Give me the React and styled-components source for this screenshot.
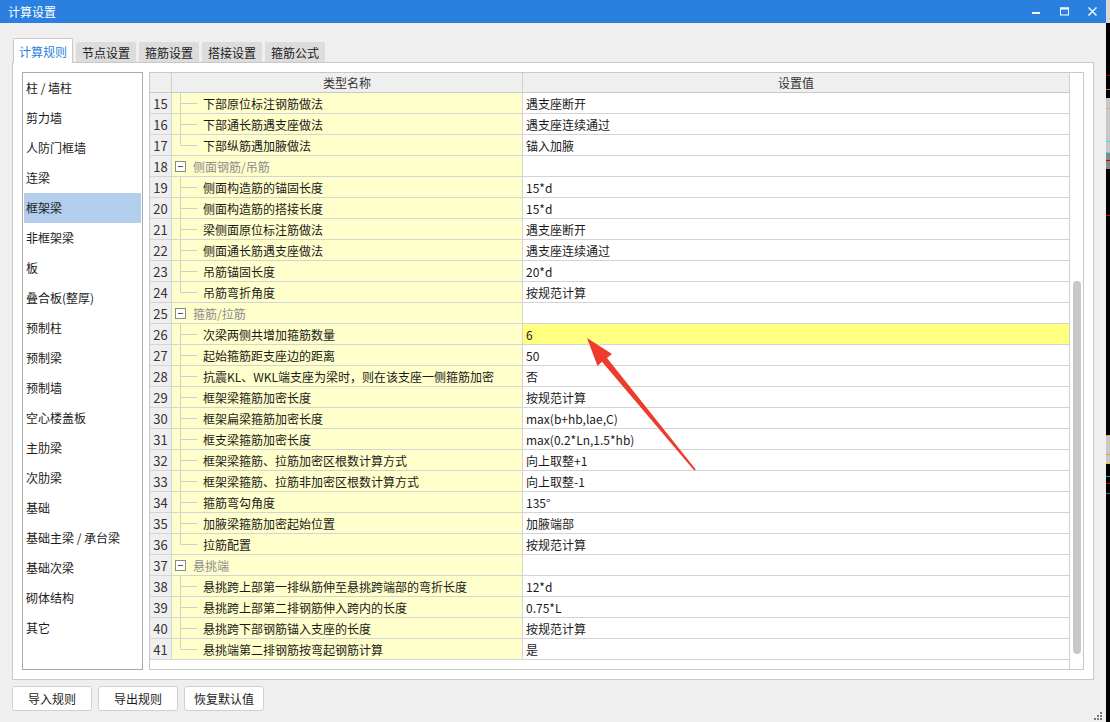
import React from 'react';
import styled, { createGlobalStyle } from 'styled-components';

const Global = createGlobalStyle`
  html, body { margin: 0; padding: 0; background: #000; }
  body {
    width: 1110px; height: 722px; overflow: hidden;
    font-family: "Noto Sans CJK SC", "Microsoft YaHei", sans-serif;
    font-size: 12px; color: #1a1a1a;
  }
  * { box-sizing: border-box; }
`;

const Screen = styled.div`
  position: relative;
  display: flex;
  width: 1110px;
  height: 722px;
`;

const Window = styled.div`
  position: relative;
  flex: 1;
  display: flex;
  flex-direction: column;
  background: #efefef;
`;

const Strip = styled.div`
  width: 4px;
  display: flex;
  flex-direction: column;
  background: #000;
`;

const StripSeg = styled.div`
  flex-shrink: 0;
  height: ${p => p.$h}px;
  background: ${p => p.$c};
`;

const TitleBar = styled.div`
  height: 23px;
  display: flex;
  align-items: center;
  background: #2b7fdf;
  color: #fff;
  padding-left: 8px;
  font-size: 12px;
`;

const Controls = styled.div`
  margin-left: auto;
  display: flex;
  height: 100%;
`;

const CtrlBtn = styled.div`
  width: 28px;
  height: 100%;
  display: flex;
  align-items: center;
  justify-content: center;
`;

const Body = styled.div`
  flex: 1;
  display: flex;
  flex-direction: column;
  padding: 15px 12px 11px 12px;
`;

const TabBar = styled.div`
  height: 24px;
  display: flex;
  align-items: flex-end;
  gap: 3px;
  padding-left: 1px;
`;

const Tab = styled.div`
  width: 60px;
  height: ${p => (p.$active ? 25 : 20)}px;
  display: flex;
  align-items: center;
  justify-content: center;
  border-radius: 2px 2px 0 0;
  background: ${p => (p.$active ? '#fff' : '#dcdcdc')};
  color: ${p => (p.$active ? '#2b7fdf' : '#1a1a1a')};
  border: ${p => (p.$active ? '1px solid #c8c8c8' : 'none')};
  border-bottom: none;
  margin-bottom: ${p => (p.$active ? -1 : 0)}px;
  padding-top: ${p => (p.$active ? 1 : 0)}px;
  z-index: 1;
`;

const Panel = styled.div`
  flex: 1;
  display: flex;
  gap: 6px;
  padding: 9px;
  background: #fff;
  border: 1px solid #c8c8c8;
`;

const List = styled.div`
  width: 121px;
  display: flex;
  flex-direction: column;
  border: 1px solid #a9a9a9;
  padding: 0 1px;
  background: #fff;
`;

const ListItem = styled.div`
  height: 30px;
  line-height: 30px;
  padding-left: 2px;
  background: ${p => (p.$sel ? '#b3cdec' : 'transparent')};
  white-space: nowrap;
`;

const Table = styled.div`
  flex: 1;
  display: flex;
  border: 1px solid #c8c8c8;
  overflow: hidden;
`;

const Grid = styled.div`
  width: 920px;
  display: flex;
  flex-direction: column;
  border-right: 1px solid #d0d0d0;
`;

const Row = styled.div`
  display: grid;
  grid-template-columns: 22px 351px 1fr;
  height: ${p => (p.$head ? 20 : 21)}px;
  flex-shrink: 0;
`;

const HeadCell = styled.div`
  background: #efefef;
  border-bottom: 1px solid #c8c8c8;
  border-right: ${p => (p.$last ? 'none' : '1px solid #d0d0d0')};
  display: flex;
  align-items: center;
  justify-content: center;
  color: #333;
`;

const NumCell = styled.div`
  background: #efefef;
  border-right: 1px solid #d4d4d4;
  border-bottom: 1px solid #d4d4d4;
  display: flex;
  align-items: center;
  justify-content: center;
  font-size: 13px;
  color: #333;
`;

const NameCell = styled.div`
  background: #ffffcc;
  border-right: 1px solid #d4d4d4;
  border-bottom: 1px solid #d4d4d4;
  display: flex;
  align-items: center;
  white-space: nowrap;
  overflow: hidden;
  color: ${p => (p.$group ? '#8c8c8c' : '#1a1a1a')};
`;

const ValueCell = styled.div`
  background: ${p => (p.$hl ? '#ffff80' : '#fff')};
  border-bottom: 1px solid #d4d4d4;
  display: flex;
  align-items: center;
  padding-left: 3px;
  white-space: nowrap;
`;

const Guide = styled.svg`
  flex-shrink: 0;
  display: block;
`;

const Filler = styled.div`
  flex: 1;
  background: #fff;
`;

const ScrollCol = styled.div`
  flex: 1;
  padding: 208px 0 0 3px;
  background: #fff;
`;

const Thumb = styled.div`
  width: 8px;
  height: 373px;
  border-radius: 4px;
  background: #c8c8c8;
`;

const ButtonRow = styled.div`
  display: flex;
  gap: 6px;
  margin-top: 6px;
`;

const Button = styled.div`
  width: 80px;
  height: 25px;
  display: flex;
  align-items: center;
  justify-content: center;
  background: #fff;
  border: 1px solid #d0d0d0;
  border-radius: 3px;
`;

const Grip = styled.svg`
  position: absolute;
  right: 4px;
  bottom: 2px;
`;

const Overlay = styled.svg`
  position: absolute;
  left: 0;
  top: 0;
  pointer-events: none;
`;

const listItems = [
  '柱 / 墙柱', '剪力墙', '人防门框墙', '连梁', '框架梁', '非框架梁', '板', '叠合板(整厚)',
  '预制柱', '预制梁', '预制墙', '空心楼盖板', '主肋梁', '次肋梁', '基础',
  '基础主梁 / 承台梁', '基础次梁', '砌体结构', '其它',
];

const rows = [
  [15, '下部原位标注钢筋做法', '遇支座断开'],
  [16, '下部通长筋遇支座做法', '遇支座连续通过'],
  [17, '下部纵筋遇加腋做法', '锚入加腋', 'last'],
  [18, '侧面钢筋/吊筋', '', 'group'],
  [19, '侧面构造筋的锚固长度', '15*d'],
  [20, '侧面构造筋的搭接长度', '15*d'],
  [21, '梁侧面原位标注筋做法', '遇支座断开'],
  [22, '侧面通长筋遇支座做法', '遇支座连续通过'],
  [23, '吊筋锚固长度', '20*d'],
  [24, '吊筋弯折角度', '按规范计算', 'last'],
  [25, '箍筋/拉筋', '', 'group'],
  [26, '次梁两侧共增加箍筋数量', '6', 'hl'],
  [27, '起始箍筋距支座边的距离', '50'],
  [28, '抗震KL、WKL端支座为梁时，则在该支座一侧箍筋加密', '否'],
  [29, '框架梁箍筋加密长度', '按规范计算'],
  [30, '框架扁梁箍筋加密长度', 'max(b+hb,lae,C)'],
  [31, '框支梁箍筋加密长度', 'max(0.2*Ln,1.5*hb)'],
  [32, '框架梁箍筋、拉筋加密区根数计算方式', '向上取整+1'],
  [33, '框架梁箍筋、拉筋非加密区根数计算方式', '向上取整-1'],
  [34, '箍筋弯勾角度', '135°'],
  [35, '加腋梁箍筋加密起始位置', '加腋端部'],
  [36, '拉筋配置', '按规范计算', 'last'],
  [37, '悬挑端', '', 'group'],
  [38, '悬挑跨上部第一排纵筋伸至悬挑跨端部的弯折长度', '12*d'],
  [39, '悬挑跨上部第二排钢筋伸入跨内的长度', '0.75*L'],
  [40, '悬挑跨下部钢筋锚入支座的长度', '按规范计算'],
  [41, '悬挑端第二排钢筋按弯起钢筋计算', '是', 'last'],
];

const strip = [
  [23, '#d8d8d8'], [52, '#000'], [1, '#a00000'], [13, '#000'], [1, '#a06050'], [8, '#000'],
  [10, '#c8c8c8'], [1, '#f0a080'], [20, '#c8c8c8'], [12, '#c8c8c8'], [1, '#40e0e0'], [10, '#c8c8c8'],
  [1, '#40e0e0'], [7, '#888'], [1, '#d00000'], [8, '#888'], [46, '#000'], [1, '#d00000'],
  [219, '#000'], [1, '#f0a030'], [7, '#c8c8c8'], [1, '#e0e040'], [10, '#c8c8c8'], [1, '#f0a030'],
  [8, '#c8c8c8'], [1, '#f0c020'], [12, '#000'], [1, '#20a0a0'], [6, '#000'], [1, '#d00000'],
  [9, '#000'], [1, '#208080'], [200, '#000'],
];

function TreeGuide({ kind }) {
  if (kind === 'group') {
    return (
      <Guide width="21" height="20" viewBox="0 0 21 20">
        <rect x="3.5" y="5.5" width="10" height="10" fill="#fff" stroke="#8a8a8a" />
        <line x1="6" y1="10.5" x2="11" y2="10.5" stroke="#555" />
      </Guide>
    );
  }
  return (
    <Guide width="31" height="20" viewBox="0 0 31 20">
      <line x1="8.5" y1="0" x2="8.5" y2={kind === 'last' ? 10.5 : 20} stroke="#cfcfcf" />
      <line x1="9" y1="10.5" x2="25" y2="10.5" stroke="#cfcfcf" />
    </Guide>
  );
}

export default function App() {
  return (
    <Screen>
      <Global />
      <Window>
        <TitleBar>
          计算设置
          <Controls>
            <CtrlBtn>
              <svg width="9" height="9" viewBox="0 0 9 9">
                <rect x="0" y="5" width="8" height="2" fill="#fff" />
              </svg>
            </CtrlBtn>
            <CtrlBtn>
              <svg width="9" height="9" viewBox="0 0 9 9">
                <rect x="0.5" y="1" width="8" height="7" fill="none" stroke="#fff" />
                <rect x="0" y="0.5" width="9" height="2" fill="#fff" />
              </svg>
            </CtrlBtn>
            <CtrlBtn>
              <svg width="9" height="9" viewBox="0 0 9 9">
                <path d="M0.5 0.5 L8.5 8.5 M8.5 0.5 L0.5 8.5" stroke="#fff" strokeWidth="1.4" />
              </svg>
            </CtrlBtn>
          </Controls>
        </TitleBar>
        <Body>
          <TabBar>
            <Tab $active>计算规则</Tab>
            <Tab>节点设置</Tab>
            <Tab>箍筋设置</Tab>
            <Tab>搭接设置</Tab>
            <Tab>箍筋公式</Tab>
          </TabBar>
          <Panel>
            <List>
              {listItems.map(t => (
                <ListItem key={t} $sel={t === '框架梁'}>{t}</ListItem>
              ))}
            </List>
            <Table>
              <Grid>
                <Row $head>
                  <HeadCell />
                  <HeadCell>类型名称</HeadCell>
                  <HeadCell $last>设置值</HeadCell>
                </Row>
                {rows.map(([n, name, val, kind]) => (
                  <Row key={n}>
                    <NumCell>{n}</NumCell>
                    <NameCell $group={kind === 'group'}>
                      <TreeGuide kind={kind} />
                      {name}
                    </NameCell>
                    <ValueCell $hl={kind === 'hl'}>{val}</ValueCell>
                  </Row>
                ))}
                <Filler />
              </Grid>
              <ScrollCol>
                <Thumb />
              </ScrollCol>
            </Table>
          </Panel>
          <ButtonRow>
            <Button>导入规则</Button>
            <Button>导出规则</Button>
            <Button>恢复默认值</Button>
          </ButtonRow>
        </Body>
        <Grip width="8" height="8" viewBox="0 0 8 8">
          <rect x="6" y="0" width="2" height="2" fill="#7a7a7a" />
          <rect x="3" y="3" width="2" height="2" fill="#7a7a7a" />
          <rect x="6" y="3" width="2" height="2" fill="#7a7a7a" />
          <rect x="0" y="6" width="2" height="2" fill="#7a7a7a" />
          <rect x="3" y="6" width="2" height="2" fill="#7a7a7a" />
          <rect x="6" y="6" width="2" height="2" fill="#7a7a7a" />
        </Grip>
      </Window>
      <Strip>
        {strip.map(([h, c], i) => (
          <StripSeg key={i} $h={h} $c={c} />
        ))}
      </Strip>
      <Overlay width="1110" height="722" viewBox="0 0 1110 722">
        <polygon
          points="587,338 612,354 607,358 695.8,469.4 694.2,470.6 602,361.8 597.5,366"
          fill="#ee3b2c"
        />
      </Overlay>
    </Screen>
  );
}
